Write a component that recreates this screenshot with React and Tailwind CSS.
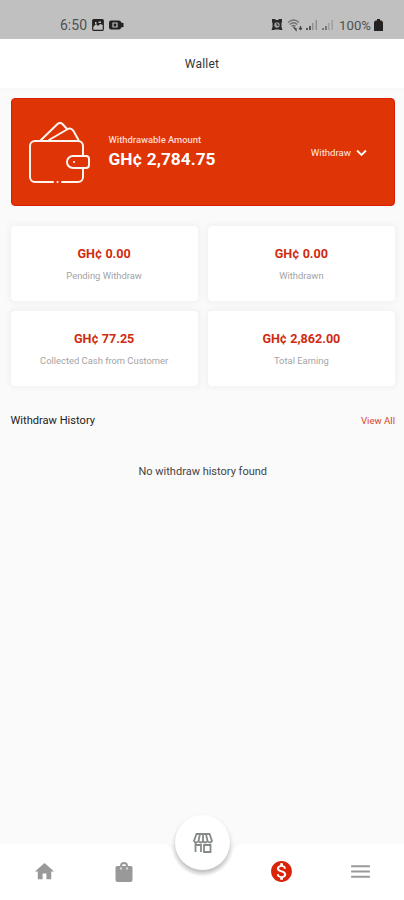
import { MdHome, MdMonetizationOn, MdMenu } from 'react-icons/md';

const stats = [
  { amount: 'GH¢ 0.00', label: 'Pending Withdraw' },
  { amount: 'GH¢ 0.00', label: 'Withdrawn' },
  { amount: 'GH¢ 77.25', label: 'Collected Cash from Customer' },
  { amount: 'GH¢ 2,862.00', label: 'Total Earning' },
];

function SignalIcon({ className = '' }) {
  return (
    <svg width="12" height="12" viewBox="0 0 12 12" fill="currentColor" className={className}>
      <path d="M0 9h2v2H0zM3 7h2v4H3z" />
      <path d="M6 4h1.5v7H6zM9.5 1H11v10H9.5z" opacity=".45" />
    </svg>
  );
}

function StatusBar() {
  return (
    <header className="flex h-[39px] shrink-0 items-start bg-[#c0c0c0] pt-[18px] pr-[21px] pl-[60px]">
      <span className="text-[14px] leading-[15px] text-[#505050]">6:50</span>
      {/* Gallery */}
      <svg width="12" height="12" viewBox="0 0 12 12" className="mt-[1px] ml-[5px]">
        <rect x=".7" y=".7" width="10.6" height="10.6" rx="1" fill="none" stroke="#222" strokeWidth="1.2" />
        <path d="M1 1h10v5L8 5 6 7 4 5 1 8z" fill="#222" />
        <path d="M3 3h1.5v2H3zM6.5 2.5H9V4H6.5z" fill="#c0c0c0" />
      </svg>
      {/* Screen recorder */}
      <svg width="15" height="12" viewBox="0 0 15 12" className="mt-[1px] ml-[5px]">
        <path d="M2 1.5h8a2 2 0 0 1 2 2l2.5.5v4L12 8.5a2 2 0 0 1-2 2H2a2 2 0 0 1-2-2v-5a2 2 0 0 1 2-2z" fill="#222" />
        <path d="M4 4h4v4H4z" fill="none" stroke="#c0c0c0" strokeWidth="1.2" />
      </svg>
      {/* Alarm */}
      <svg width="12" height="12" viewBox="0 0 12 12" className="mt-[1px] ml-auto">
        <path d="M1 0h3l1 1h2l1-1h3v3l-.5 1v4l1 3H9l-1-.6H4L3 11H.5l1-3V4L1 3z" fill="#292929" />
        <circle cx="6" cy="6" r="2.7" fill="#a5a5a5" />
        <path d="M6 3.8v2.4h1.8" fill="none" stroke="#222" />
      </svg>
      {/* Wi-Fi */}
      <svg width="16" height="13" viewBox="0 0 16 13" className="mt-[1px] ml-[4px]" fill="none" stroke="#737373" strokeWidth="1.3">
        <path d="M1 3.5q5.500-5 11 0M2.700 5.500q3.800-3.500 7.600 0M4.500 7.500q2-2 4 0" />
        <path d="M6.500 8l2.500 3v-2M13.500 7v3.500M12 9l1.500 1.500L15 9" stroke="#4a4a4a" />
      </svg>
      <SignalIcon className="mt-[1px] ml-[3px] text-[#555]" />
      <SignalIcon className="mt-[1px] ml-[4px] text-[#777]" />
      <span className="ml-[5px] text-[13.2px] leading-[15px] text-[#505050]">100%</span>
      <svg width="9" height="13" viewBox="0 0 9 13" className="mt-[1px] ml-[3px]">
        <path d="M3 0h3v1.500h1.500L9 3v9H0V3l1.500-1.500H3z" fill="#222" />
      </svg>
    </header>
  );
}

function WalletIcon() {
  return (
    <svg
      width="62"
      height="62"
      viewBox="0 0 62 62"
      fill="none"
      stroke="#fff4f0"
      strokeWidth="2"
      strokeLinecap="round"
      strokeLinejoin="round"
      className="mt-[23px] ml-[17px]"
    >
      <path d="M24 60H6a5 5 0 0 1-5-5V24a5 5 0 0 1 5-5h43a5 5 0 0 1 5 5v10M54 46v9a5 5 0 0 1-5 5H33" />
      <path d="M12 18L28 2.500q3-3 6 0L38 7M20 18L38 7.500q4-2.500 6.500 1.500l5 9" />
      <path d="M44 34h13a3 3 0 0 1 3 3v6a3 3 0 0 1-3 3H44a6 6 0 0 1 0-12z" />
      <path d="M28.500 60h.1M45 40h.1" />
    </svg>
  );
}

function BalanceCard() {
  return (
    <section className="flex h-[108px] shrink-0 items-start rounded-[4px] border border-[#dc1c05] bg-[#df3405] text-white">
      <WalletIcon />
      <div className="mt-[35px] ml-[18px]">
        <p className="text-[9.4px] leading-[12px] font-medium text-[#ffd9cf]">Withdrawable Amount</p>
        <p className="mt-[3px] text-[17.3px] leading-[20px] font-bold">GH¢ 2,784.75</p>
      </div>
      <button className="mt-[47px] mr-[27px] ml-auto flex items-center text-[9.6px] leading-[13px] text-[#ffe9e2]">
        Withdraw
        <svg width="11" height="8" viewBox="0 0 11 8" fill="none" stroke="white" strokeWidth="1.8" className="ml-[5px]">
          <path d="M1 1.500l4.500 4.500L10 1.500" />
        </svg>
      </button>
    </section>
  );
}

function StatCard({ amount, label }) {
  return (
    <div className="flex h-[75px] flex-col items-center rounded-[4px] bg-white pt-[20px] shadow-[0_0_5px_2px_#f1f1f1]">
      <p className="text-[12.6px] leading-[16px] font-bold text-[#cf2b10]">{amount}</p>
      <p className="mt-[8px] text-[9.4px] leading-[12px] text-[#a3a3a3]">{label}</p>
    </div>
  );
}

function StoreIcon() {
  return (
    <svg width="20" height="20" viewBox="0 0 20 20" fill="none" stroke="#858a8a" strokeWidth="1.8">
      <path d="M3.500 1h13L19 8q-2 3-4.500 0-2.300 3-4.500 0-2.200 3-4.500 0Q3 11 1 8zM7 1L5.500 8M10 1v7M13 1l1.500 7" />
      <path d="M2.500 10v9M8 19v-7H2.500M11 12h6.500v7H11z" />
    </svg>
  );
}

function BottomNav() {
  return (
    <nav className="relative h-[56px] shrink-0 bg-white text-[#999]">
      {/* Notch under the centre button */}
      <svg width="76" height="32" viewBox="0 0 76 32" className="absolute top-0 left-[165px]">
        <path d="M0 0q5 1 7 6a31 31 0 0 0 61 0q2-5 7-6z" fill="#f8f8f8" />
      </svg>
      <div className="grid h-full grid-cols-5 items-center pr-[4px] pb-[1px] pl-[5px]">
        <MdHome size={23} className="justify-self-center" />
        <svg width="18" height="22" viewBox="0 0 18 22" className="justify-self-center">
          <path
            d="M2 5h3a4 4 0 0 1 8 0h3a1.500 1.500 0 0 1 1.500 1.500V19a2 2 0 0 1-2 2h-13a2 2 0 0 1-2-2V6.500A1.500 1.500 0 0 1 2 5zM7 5h4a2 2 0 0 0-4 0z"
            fill="currentColor"
          />
          <path d="M6 6.500v2M12 6.500v2" fill="none" stroke="white" strokeWidth="1.300" />
        </svg>
        <span />
        <MdMonetizationOn size={25} className="justify-self-center text-[#d92408]" />
        <MdMenu size={25} className="justify-self-center" />
      </div>
      <button className="absolute -top-[29px] left-[175px] flex size-[55px] items-center justify-center rounded-full bg-white shadow-[0_3px_4px_#b9b9b9]">
        <StoreIcon />
      </button>
    </nav>
  );
}

export default function App() {
  return (
    <div className="flex h-[900px] w-[404px] flex-col overflow-hidden bg-[#fafafa] font-[Roboto,sans-serif]">
      <StatusBar />
      <div className="flex h-[49px] shrink-0 items-center justify-center bg-white shadow-[0_1px_2px_#f7f7f7]">
        <h1 className="text-[12px] leading-[16px] tracking-[0.2px] text-[#333]">Wallet</h1>
      </div>

      <main className="flex flex-1 flex-col pt-[10px] pr-[9px] pl-[10.5px]">
        <BalanceCard />
        <section className="mt-[19.5px] grid grid-cols-2 gap-[10px]">
          {stats.map((s) => (
            <StatCard key={s.label} {...s} />
          ))}
        </section>

        <div className="mt-[27.5px] flex items-center justify-between">
          <h2 className="text-[11.1px] leading-[16px] text-[#222]">Withdraw History</h2>
          <button className="text-[9.6px] leading-[16px] text-[#d94427]">View All</button>
        </div>
        <p className="mt-[35px] text-center text-[11px] leading-[16px] text-[#444]">
          No withdraw history found
        </p>
      </main>

      <BottomNav />
    </div>
  );
}
